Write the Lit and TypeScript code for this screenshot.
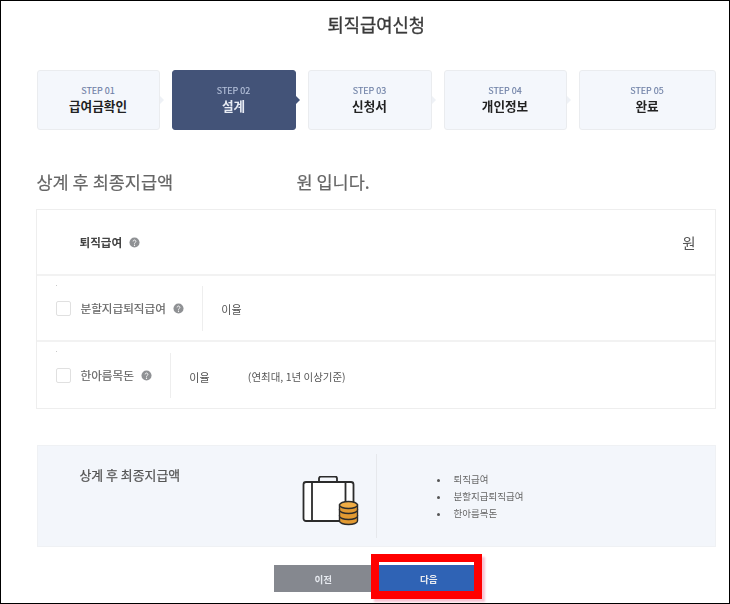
import { LitElement, html, css, svg } from "lit";
import { customElement } from "lit/decorators.js";

const steps = [
  ["STEP 01", "급여금확인"],
  ["STEP 02", "설계"],
  ["STEP 03", "신청서"],
  ["STEP 04", "개인정보"],
  ["STEP 05", "완료"],
];

const help = html`<svg class="help" viewBox="0 0 12 12" aria-hidden="true">
  <circle cx="6" cy="6" r="5.5" fill="#8f9194"></circle>
  <path d="M4.5 4.8a1.5 1.5 0 1 1 2.3 1.3c-.6.4-.8.6-.8 1.2" fill="none" stroke="#fff" stroke-width="1"></path>
  <circle cx="6" cy="9" r=".7" fill="#fff"></circle>
</svg>`;

const briefcase = svg`
  <path d="M16.500 6V2.500a2 2 0 0 1 2-2h14a2 2 0 0 1 2 2V6" fill="none" stroke="#2b2b2b" stroke-width="1.8"></path>
  <rect x="1" y="6" width="50" height="39" rx="2.5" fill="#fff" stroke="#2b2b2b" stroke-width="1.8"></rect>
  <path d="M9.500 6v39M43 6v39" stroke="#2b2b2b" stroke-width="1.8"></path>
  <g stroke="#2b2b2b" stroke-width="1.4">
    <path d="M37 40v5c0 2 4 3.500 9 3.500s9-1.500 9-3.500v-5z" fill="#e29a32"></path>
    <path d="M37 34v6c0 2 4 3.500 9 3.500s9-1.500 9-3.500v-6z" fill="#e29a32"></path>
    <path d="M37 29v5c0 2 4 3.500 9 3.500s9-1.500 9-3.500v-5z" fill="#e29a32"></path>
    <ellipse cx="46" cy="29" rx="9" ry="3.500" fill="#f0ad45"></ellipse>
  </g>`;

@customElement("app-root")
export class AppRoot extends LitElement {
  static styles = css`
    :host {
      display: block;
      width: 730px;
      height: 604px;
      box-sizing: border-box;
      position: relative;
      background: #fff;
      border-style: solid;
      border-color: #000;
      border-width: 1px 1.500px 1.500px 1.500px;
      overflow: hidden;
      font-family: "Noto Sans CJK KR", "Noto Sans", sans-serif;
      color: #333;
    }
    .page {
      filter: blur(0.4px);
      padding: 0 13px 0 35.500px;
    }
    h1 {
      margin: 0;
      height: 69px;
      padding-top: 11px;
      box-sizing: border-box;
      font-size: 17.700px;
      line-height: 24px;
      font-weight: 400;
      -webkit-text-stroke: 0.35px #3a3a3a;
      text-align: center;
      color: #3a3a3a;
    }
    .steps {
      display: grid;
      grid-template-columns: 123px 124px 124px 123px 137px;
      column-gap: 12px;
      height: 60px;
    }
    .step {
      position: relative;
      box-sizing: border-box;
      background: #f4f7fc;
      border: 1px solid #eaecef;
      border-radius: 3px;
      display: flex;
      flex-direction: column;
      align-items: center;
      justify-content: center;
      padding-bottom: 2px;
    }
    .step::after {
      content: "";
      position: absolute;
      right: -5px;
      top: 25px;
      width: 0;
      height: 0;
      border-left: 4px solid #eef1f6;
      border-top: 4px solid transparent;
      border-bottom: 4px solid transparent;
    }
    .step:last-child::after { display: none; }
    .step.on { background: #435378; border-color: #435378; }
    .step.on::after { border-left-color: #435378; }
    .num { font-size: 9px; line-height: 13px; color: #6f80a6; -webkit-text-stroke: 0.15px #6f80a6; }
    .name { font-size: 12.600px; line-height: 17px; font-weight: 700; color: #222; }
    .on .num { color: #b4c0da; -webkit-text-stroke: 0.15px #b4c0da; }
    .on .name { color: #e8ecf4; }
    .sum {
      display: flex;
      margin-top: 38px;
      height: 28px;
      font-size: 17.500px;
      line-height: 28px;
      color: #666;
      -webkit-text-stroke: 0.2px #666;
    }
    .sum span:first-child { width: 260px; }
    .table {
      box-sizing: border-box;
      margin-top: 13px;
      margin-left: -1px;
      width: 680px;
      height: 200px;
      border: 1px solid #eeeeee;
      display: grid;
      grid-template-rows: 64px 66px 1fr;
    }
    .row {
      display: flex;
      align-items: center;
      padding-left: 19px;
      position: relative;
      border-top: 2px solid #f2f2f2;
    }
    .row:first-child {
      border-top: 0;
      padding: 0 19px 0 43px;
      justify-content: space-between;
    }
    .row:first-child .label { font-weight: 700; color: #444; -webkit-text-stroke: 0; }
    .unit { font-size: 14.500px; color: #555; }
    .box {
      width: 13px;
      height: 13px;
      border: 1px solid #e0e0e0;
      border-radius: 2px;
      background: #fff;
      flex: none;
      margin-right: 10px;
      margin-top: 1px;
    }
    .tick {
      position: absolute;
      left: 19px;
      top: 9px;
      width: 1px;
      height: 1px;
      background: #c9c9c9;
    }
    .label {
      display: inline-flex;
      align-items: center;
      font-size: 11.600px;
      line-height: 16px;
      color: #666;
      -webkit-text-stroke: 0.2px #666;
      white-space: nowrap;
    }
    .help { width: 11px; height: 11px; margin-left: 7px; flex: none; }
    .split {
      width: 1px;
      height: 45px;
      background: #eeeeee;
      margin-left: 18px;
      margin-right: 18.500px;
      flex: none;
    }
    .rate { font-size: 11px; color: #555; width: 58.500px; padding-top: 2px; }
    .row.two .rate { padding-top: 3px; }
    .note { font-size: 10.500px; color: #555; padding-top: 2px; }
    .panel {
      box-sizing: border-box;
      margin-top: 36px;
      height: 102px;
      width: 679px;
      background: #f3f6fb;
      border: 1px solid #eff1f4;
      display: flex;
      align-items: stretch;
      padding: 8px 0;
    }
    .p-title {
      width: 264px;
      padding: 12px 0 0 42px;
      box-sizing: border-box;
      font-size: 12.900px;
      line-height: 18px;
      color: #555;
      -webkit-text-stroke: 0.25px #555;
    }
    .p-icon { width: 74px; display: flex; padding-top: 22px; }
    .p-icon svg { width: 58px; height: 52px; display: block; }
    .p-list {
      border-left: 1px solid #e6e8ec;
      margin: 0;
      padding: 17px 0 0 77px;
      list-style: none;
      font-size: 9.500px;
      line-height: 17px;
      color: #666;
    }
    .p-list li { position: relative; }
    .p-list li::before {
      content: "";
      position: absolute;
      left: -17px;
      top: 7.500px;
      width: 3px;
      height: 3px;
      border-radius: 50%;
      background: #555;
    }
    .actions {
      display: flex;
      justify-content: center;
      gap: 7px;
      margin-top: 18px;
      margin-left: -4px;
    }
    button {
      border: 0;
      padding: 0;
      width: 98px;
      height: 27px;
      font: 700 9.500px "Noto Sans CJK KR", sans-serif;
      color: #e6e9ef;
    }
    .prev { background: #85888f; }
    .next { background: #2f63b5; width: 95px; padding-left: 4px; }
    .mark {
      position: absolute;
      left: 369.500px;
      top: 553px;
      width: 111px;
      height: 45px;
      box-sizing: border-box;
      border: 8px solid #ff0000;
      box-shadow: 3px 3px 2px #f9c4d4;
      pointer-events: none;
    }
  `;

  render() {
    return html`<div class="page">
        <h1>퇴직급여신청</h1>
        <div class="steps">
          ${steps.map(
            ([n, t], i) => html`<div class="step ${i === 1 ? "on" : ""}">
              <div class="num">${n}</div>
              <div class="name">${t}</div>
            </div>`
          )}
        </div>
        <div class="sum"><span>상계 후 최종지급액</span><span>원 입니다.</span></div>
        <div class="table">
          <div class="row">
            <span class="label">퇴직급여${help}</span>
            <span class="unit">원</span>
          </div>
          <div class="row">
            <i class="tick"></i>
            <span class="box"></span>
            <span class="label">분할지급퇴직급여${help}</span>
            <span class="split"></span>
            <span class="rate">이율</span>
          </div>
          <div class="row two">
            <i class="tick"></i>
            <span class="box"></span>
            <span class="label">한아름목돈${help}</span>
            <span class="split"></span>
            <span class="rate">이율</span>
            <span class="note">(연최대, 1년 이상기준)</span>
          </div>
        </div>
        <div class="panel">
          <div class="p-title">상계 후 최종지급액</div>
          <div class="p-icon">
            <svg viewBox="0 0 57 52" aria-hidden="true">${briefcase}</svg>
          </div>
          <ul class="p-list">
            <li>퇴직급여</li>
            <li>분할지급퇴직급여</li>
            <li>한아름목돈</li>
          </ul>
        </div>
        <div class="actions">
          <button class="prev">이전</button>
          <button class="next">다음</button>
        </div>
      </div>
      <div class="mark"></div>`;
  }
}
